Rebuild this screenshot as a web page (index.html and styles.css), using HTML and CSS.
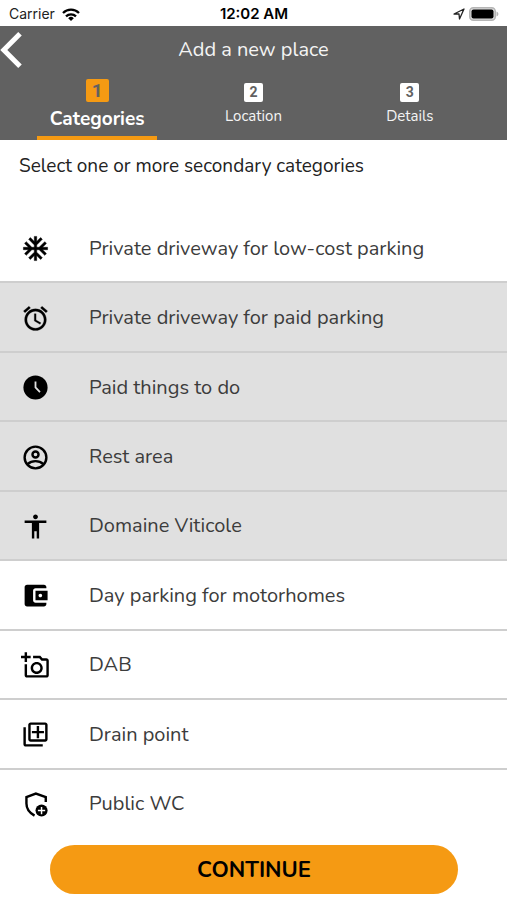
FILE: index.html
```html
<!DOCTYPE html>
<html lang="en">
<head>
<meta charset="utf-8">
<meta name="viewport" content="width=device-width, initial-scale=1">
<title>Add a new place</title>
<link rel="stylesheet" href="styles.css">
</head>
<body>
<div class="status">
  <div class="status-left">
    <span>Carrier</span>
    <svg class="wifi" viewBox="0 0 18 13" aria-hidden="true"><g fill="none" stroke="#000" stroke-width="2.3"><path d="M1 5a11.4 11.4 0 0 1 16 0"/><path d="M4 8.3a7.2 7.2 0 0 1 10 0"/></g><path d="M9 13 6.200 10.200a4 4 0 0 1 5.600 0z"/></svg>
  </div>
  <span class="clock">12:02 AM</span>
  <div class="status-right">
    <svg class="arrow" viewBox="0 0 12 12" aria-hidden="true"><path d="M1 6 11 1 6.500 11 6 6z" fill="none" stroke="#222" stroke-width="1.300" stroke-linejoin="round"/></svg>
    <svg class="battery" viewBox="0 0 30 14" aria-hidden="true"><rect x="0.750" y="0.750" width="25.500" height="12.500" rx="3.500" fill="#ddd" stroke="#b5b5b5" stroke-width="1.500"/><rect x="2.500" y="2.500" width="22" height="9" rx="2"/><path d="M27.500 4.500c2.500 1 2.500 4 0 5z" fill="#b5b5b5"/></svg>
  </div>
</div>
<header class="header">
  <div class="titlebar">
    <button class="back" type="button" aria-label="Back"><svg viewBox="0 0 22 36" aria-hidden="true"><path d="M20 1.800 3.800 18 20 34.200" fill="none" stroke="#fff" stroke-width="5"/></svg></button>
    <h1>Add a new place</h1>
  </div>
  <nav class="tabs">
    <a class="tab active" href="#categories" aria-current="step"><span class="num">1</span><span>Categories</span></a>
    <a class="tab" href="#location"><span class="num">2</span><span>Location</span></a>
    <a class="tab" href="#details"><span class="num">3</span><span>Details</span></a>
  </nav>
</header>
<main class="main" id="categories">
  <h2>Select one or more secondary categories</h2>
  <ul class="list">
    <li><button class="row" type="button" aria-pressed="false"><svg class="icon" viewBox="0 0 24 24" aria-hidden="true"><path d="M22 11h-4.170l3.240-3.240-1.410-1.420L15 11h-2V9l4.660-4.660-1.420-1.410L13 6.170V2h-2v4.170L7.760 2.930 6.340 4.340 11 9v2H9L4.340 6.340 2.930 7.760 6.170 11H2v2h4.170l-3.240 3.240 1.410 1.420L9 13h2v2l-4.660 4.660 1.420 1.410L11 17.830V22h2v-4.170l3.240 3.240 1.420-1.410L13 15v-2h2l4.660 4.660 1.410-1.420L17.830 13H22z" stroke="#000" stroke-width="0.400"/></svg><span>Private driveway for low-cost parking</span></button></li>
    <li><button class="row" type="button" aria-pressed="true"><svg class="icon" viewBox="0 0 24 24" aria-hidden="true"><path d="M22 5.720l-4.600-3.860-1.290 1.530 4.600 3.860L22 5.720zM7.880 3.390L6.600 1.860 2 5.710l1.290 1.530 4.590-3.850zM12.500 8H11v6l4.750 2.850.75-1.230-4-2.370V8zM12 4c-4.970 0-9 4.030-9 9s4.020 9 9 9c4.970 0 9-4.030 9-9s-4.030-9-9-9zm0 16c-3.870 0-7-3.130-7-7s3.130-7 7-7 7 3.130 7 7-3.130 7-7 7z" stroke="#000" stroke-width="0.200"/></svg><span>Private driveway for paid parking</span></button></li>
    <li><button class="row" type="button" aria-pressed="true"><svg class="icon" viewBox="0 0 24 24" aria-hidden="true"><circle cx="12" cy="12" r="10"/><path d="M12 7v5l3.700 3.800" fill="none" stroke="#e0e0e0" stroke-width="1.500"/></svg><span>Paid things to do</span></button></li>
    <li><button class="row" type="button" aria-pressed="true"><svg class="icon" viewBox="0 0 24 24" aria-hidden="true"><g fill="none" stroke="#000" stroke-width="2"><circle cx="12" cy="12" r="9"/><circle cx="12" cy="9.500" r="2.500"/><path d="M5.500 17.500c3.500-3.300 9.500-3.300 13 0"/></g></svg><span>Rest area</span></button></li>
    <li><button class="row" type="button" aria-pressed="true"><svg class="icon" viewBox="0 0 24 24" aria-hidden="true"><path d="M12 2c1.100 0 2 .9 2 2s-.9 2-2 2-2-.9-2-2 .9-2 2-2zm9 7h-6v13h-2v-6h-2v6H9V9H3V7h18v2z"/></svg><span>Domaine Viticole</span></button></li>
    <li><button class="row" type="button" aria-pressed="false"><svg class="icon" viewBox="0 0 24 24" aria-hidden="true"><path d="M21 18v1c0 1.100-.9 2-2 2H5c-1.110 0-2-.9-2-2V5c0-1.100.89-2 2-2h14c1.100 0 2 .9 2 2v1h-9c-1.110 0-2 .9-2 2v8c0 1.100.89 2 2 2h9zm-9-2h10V8H12v8zm4-2.500c-.83 0-1.500-.67-1.500-1.500s.67-1.500 1.500-1.500 1.500.67 1.500 1.500-.67 1.500-1.500 1.500z"/></svg><span>Day parking for motorhomes</span></button></li>
    <li><button class="row" type="button" aria-pressed="false"><svg class="icon" viewBox="0 0 24 24" aria-hidden="true"><path d="M21 6h-3.170L16 4h-6v2h5.120l1.830 2H21v12H5v-9H3v9c0 1.100.9 2 2 2h16c1.100 0 2-.9 2-2V8c0-1.100-.9-2-2-2zM8 14c0 2.760 2.240 5 5 5s5-2.240 5-5-2.240-5-5-5-5 2.240-5 5zm5-3c1.650 0 3 1.350 3 3s-1.350 3-3 3-3-1.350-3-3 1.350-3 3-3zM5 6h3V4H5V1H3v3H0v2h3v3h2z"/></svg><span>DAB</span></button></li>
    <li><button class="row" type="button" aria-pressed="false"><svg class="icon" viewBox="0 0 24 24" aria-hidden="true"><path d="M4 6H2v14c0 1.100.9 2 2 2h14v-2H4V6zm16-4H8c-1.100 0-2 .9-2 2v12c0 1.100.9 2 2 2h12c1.100 0 2-.9 2-2V4c0-1.100-.9-2-2-2zm0 14H8V4h12v12zm-7-1h2v-4h4V9h-4V5h-2v4H9v2h4z"/></svg><span>Drain point</span></button></li>
    <li><button class="row" type="button" aria-pressed="false"><svg class="icon" viewBox="0 0 24 24" aria-hidden="true"><path d="M20.500 10V5.800L12.300 3 4.500 5.800v5.400c0 4.300 2.600 7.800 6.700 10" fill="none" stroke="#000" stroke-width="2"/><circle cx="17" cy="17" r="5"/><path d="M17 14v6m-3-3h6" stroke="#fff" stroke-width="1.200"/></svg><span>Public WC</span></button></li>
  </ul>
</main>
<footer class="footer"><button class="continue" type="button">CONTINUE</button></footer>
</body>
</html>
```
FILE: styles.css
```css
* {
  box-sizing: border-box;
}

body {
  margin: 0;
  min-height: 100vh;
  display: flex;
  flex-direction: column;
  background: #fff;
  color: #222;
  font-family: "Nunito", "Noto Sans", sans-serif;
}

button {
  font: inherit;
  border: 0;
  cursor: pointer;
}

svg {
  display: block;
}

.status {
  display: grid;
  grid-template-columns: 1fr auto 1fr;
  align-items: center;
  height: 26px;
  padding: 2px 8px 0 9px;
  font-family: Inter, sans-serif;
  font-size: 14px;
  line-height: 20px;
}

.status-left,
.status-right {
  display: flex;
  align-items: center;
  gap: 7px;
}

.status-right {
  justify-content: flex-end;
  gap: 4px;
}

.clock {
  font-size: 15px;
  font-weight: 600;
  color: #000;
}

.wifi {
  width: 18px;
  height: 13px;
}

.arrow {
  width: 12px;
  height: 12px;
}

.battery {
  width: 30px;
  height: 14px;
}

.header {
  background: #616161;
  color: #fff;
}

.titlebar {
  display: grid;
  grid-template-columns: 24px 1fr 24px;
  align-items: center;
  height: 48px;
}

.back {
  padding: 0;
  background: none;
}

.back svg {
  width: 22px;
  height: 36px;
}

h1 {
  margin: 0;
  font-size: 20px;
  font-weight: 400;
  line-height: 28px;
  text-align: center;
  color: #f4f4f4;
}

.tabs {
  display: grid;
  grid-template-columns: repeat(3, 1fr);
  padding: 0 19px;
}

.tab {
  display: flex;
  flex-direction: column;
  align-items: center;
  justify-content: flex-end;
  gap: 4px;
  height: 66px;
  margin: 0 18px;
  padding-bottom: 14px;
  color: #f4f4f4;
  font-size: 15px;
  line-height: 20px;
  text-decoration: none;
}

.num {
  width: 19px;
  height: 19px;
  border-radius: 2px;
  background: #fff;
  color: #616161;
  font-family: Roboto, sans-serif;
  font-size: 14px;
  font-weight: 700;
  line-height: 19px;
  text-align: center;
}

.tab.active {
  gap: 3px;
  padding-bottom: 3px;
  border-bottom: 4px solid #f59a13;
  color: #fff;
  font-size: 19px;
  font-weight: 700;
  line-height: 28px;
}

.active .num {
  width: 23px;
  height: 23px;
  background: #f59a13;
  font-size: 19px;
  line-height: 23px;
}

.main {
  flex: 1;
  display: flex;
  flex-direction: column;
}

h2 {
  margin: 0;
  padding: 12px 19px 34px;
  font-size: 19px;
  font-weight: 400;
  line-height: 28px;
}

.list {
  flex: 1;
  display: grid;
  grid-auto-rows: 1fr;
  margin: 0;
  padding: 0;
  list-style: none;
}

.list li {
  display: flex;
  border-bottom: 2px solid #cecece;
}

.list li:last-child {
  border-bottom-color: transparent;
}

.row {
  flex: 1;
  display: flex;
  align-items: center;
  gap: 39px;
  padding: 2px 21px 0;
  background: #fff;
  color: #3c3c3c;
  font-size: 20px;
  line-height: 28px;
  text-align: left;
}

.row[aria-pressed="true"] {
  background: #e0e0e0;
}

.icon {
  flex: none;
  width: 29px;
  height: 29px;
}

.footer {
  padding: 6px 49px 6px 50px;
}

.continue {
  display: block;
  width: 100%;
  height: 49px;
  border-radius: 25px;
  background: #f59a13;
  color: #000;
  font-size: 22px;
  font-weight: 700;
}
```
